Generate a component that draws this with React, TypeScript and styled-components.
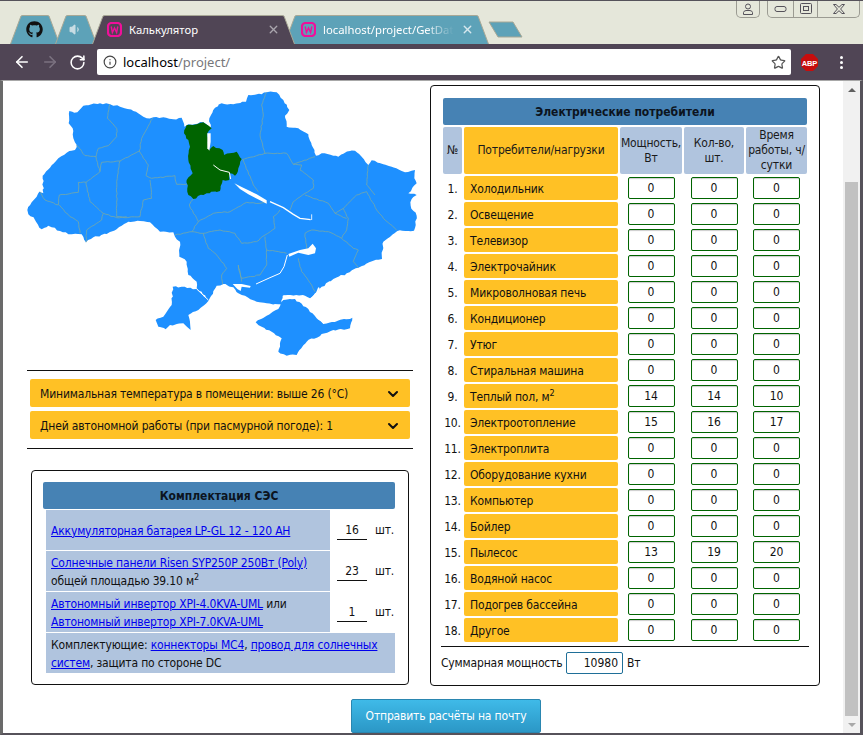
import React from "react";
import styled, { createGlobalStyle } from "styled-components";
import { ArrowLeft, ArrowRight, RotateCw, Info, Star, X, ChevronDown, Volume1 } from "lucide-react";
import { FaGithub } from "react-icons/fa";

const Global = createGlobalStyle`
  html, body { margin: 0; padding: 0; background: #fff; }
  * { box-sizing: border-box; }
  body { font-family: "DejaVu Sans Condensed", "Noto Sans", sans-serif; font-size: 12px; letter-spacing: -0.17px; color: #111; }
`;

const Page = styled.div`
  width: 863px; height: 735px; display: flex; flex-direction: column; overflow: hidden;
  background: #e5e7da; border-top: 1px solid #55525a;
`;
const TabStrip = styled.div`
  height: 43px; display: flex; align-items: flex-end; padding-left: 10px; position: relative;
`;
const TabBody = styled.div<{ $w: number; $active?: boolean; $overlap: number }>`
  position: relative; width: ${p => p.$w}px; height: 29px; flex: none; margin-right: -${p => p.$overlap}px;
  z-index: ${p => p.$active ? 1 : 0};
  display: flex; align-items: center; color: #fff; font: 11.3px "Noto Sans", sans-serif; letter-spacing: 0;
`;
const TabShape = styled.svg`
  position: absolute; left: 0; top: 0; width: 100%; height: 100%;
`;
const TabContent = styled.div<{ $pl: number }>`
  position: relative; display: flex; align-items: center; gap: 7px; width: 100%; padding: 0 15px 0 ${p => p.$pl}px;
`;
const TabTitle = styled.span<{ $fade?: boolean }>`
  flex: 1; white-space: nowrap; overflow: hidden;
  ${p => p.$fade ? "-webkit-mask-image: linear-gradient(90deg,#000 78%,transparent);" : ""}
`;
const NewTab = styled.svg`
  width: 36px; height: 18px; flex: none; margin: 0 0 5px 4px;
`;
const WindowButtons = styled.div`
  position: absolute; right: 3px; top: -1px; display: flex; gap: 7px;
`;
const WinGroup = styled.div`
  display: flex; height: 18px; border: 1px solid #9b9b92; border-top: 0; border-radius: 0 0 5px 5px;
`;
const WinBtn = styled.div<{ $w: number; $sep?: boolean }>`
  width: ${p => p.$w}px; display: flex; align-items: center; justify-content: center;
  ${p => p.$sep ? "border-right: 1px solid #9b9b92;" : ""}
`;
const Toolbar = styled.div`
  height: 36px; background: #504555; display: flex; align-items: center; padding: 0 0 0 13px; color: #fff;
`;
const NavIcon = styled.div<{ $dim?: boolean }>`
  width: 28px; display: flex; justify-content: flex-start; color: ${p => p.$dim ? "#7b7280" : "#fff"};
`;
const Omnibox = styled.div`
  width: 694px; height: 26px; background: #fff; border-radius: 2px;
  display: flex; align-items: center; padding: 0 5px 0 6px; gap: 6px; font: 13px "Noto Sans", sans-serif; letter-spacing: 0; color: #000;
`;
const UrlPath = styled.span`
  color: #77777a;
`;
const Url = styled.span`
  flex: 1;
`;
const Abp = styled.svg`
  margin-left: 10px; flex: none;
`;
const Dots = styled.div`
  display: flex; flex-direction: column; gap: 2px; margin-left: 22px;
  span { width: 3px; height: 3px; background: #fff; border-radius: 50%; }
`;
const Viewport = styled.div`
  flex: 1; min-height: 0; display: flex; background: #fff;
  border-left: 3px solid #6a6a6a; border-right: 3px solid #56525a; border-bottom: 2px solid #56525a; border-top: 1px solid #a8a8a8;
`;
const Content = styled.div`
  flex: 1; min-width: 0; display: flex; flex-direction: column; padding-top: 4px;
`;
const Columns = styled.div`
  display: flex; align-items: flex-start; padding-left: 24px; gap: 17px;
`;
const LeftCol = styled.div`
  width: 386px; flex: none; display: flex; flex-direction: column;
`;
const MapSvg = styled.svg`
  width: 390px; height: 280px; display: block;
`;
const Rule = styled.div<{ $mt: number; $mb: number }>`
  height: 1px; background: #111; margin: ${p => p.$mt}px 0 ${p => p.$mb}px;
`;
const Accordion = styled.div`
  margin: 0 3px 4px; height: 28px; background: #ffc125; border-radius: 2px; display: flex; align-items: center;
  justify-content: space-between; padding: 1px 9px 0 10px;
`;
const Panel = styled.div`
  border: 1px solid #111; border-radius: 4px; background: #fff;
`;
const KitPanel = styled(Panel)`
  margin: 21px 4px 0; height: 215px; padding: 11px 13px 0 11px;
`;
const Title = styled.div<{ $h: number }>`
  height: ${p => p.$h}px; background: #4682b4; border-radius: 2px; display: flex; align-items: center; justify-content: center;
  font-weight: 700; color: #0c1420; letter-spacing: 0;
`;
const KitRows = styled.div`
  display: flex; flex-direction: column; gap: 1px; padding-left: 3px; margin-top: 1px;
`;
const KitRow = styled.div`
  display: flex; align-items: center; height: 40px;
`;
const KitCell = styled.div<{ $full?: boolean }>`
  width: ${p => p.$full ? "349px" : "284px"}; height: 40px; background: #b0c4de; padding: 1px 5px 0;
  display: flex; flex-direction: column; justify-content: center; line-height: 18px;
  ${p => p.$full ? "display: block; padding-top: 3px;" : ""}
  sup { font-size: 9px; line-height: 1; }
`;
const A = styled.a`
  color: #0000ee; text-decoration: underline; cursor: pointer;
`;
const Line = styled.div``;
const QtyInput = styled.input`
  width: 30px; margin-left: 7px; border: 0; border-bottom: 1px solid #111; height: 19px; text-align: center; padding: 0;
  font: inherit; color: #111; outline: 0; background: transparent;
`;
const Unit = styled.span`
  margin-left: 8px;
`;
const TablePanel = styled(Panel)`
  width: 390px; height: 601px; flex: none; padding: 12px 12px 0 12px;
`;
const Grid = styled.div`
  display: grid; grid-template-columns: 19px 154px 62px 60px 61px; column-gap: 2px; row-gap: 2px; margin-top: 2px;
  grid-template-rows: 47px; grid-auto-rows: 24px;
`;
const HeadCell = styled.div<{ $orange?: boolean }>`
  background: ${p => p.$orange ? "#ffc125" : "#b0c4de"}; border-radius: 2px; display: flex; align-items: center; justify-content: center;
  text-align: center; line-height: 15px; color: #1a1a1a;
`;
const Num = styled.div`
  display: flex; align-items: center; justify-content: center; white-space: nowrap; padding-top: 1px;
`;
const Name = styled.div`
  background: #ffc125; border-radius: 2px; padding-left: 6px; line-height: 26px;
  sup { font-size: 9px; line-height: 0; }
`;
const ValueCell = styled.div`
  display: flex; align-items: center; justify-content: center;
`;
const ValueInput = styled.input`
  width: 47px; height: 22px; border: 1px solid #006400; border-radius: 2px; text-align: center; font: inherit; color: #111;
  padding: 0; outline: 0; box-shadow: inset 0 1px 1px rgba(0,0,0,.2); background: #fff;
`;
const Divider = styled.div`
  height: 1px; background: #111; margin: 4px -2px 5px;
`;
const Summary = styled.div`
  display: flex; align-items: center; margin-left: -2px;
`;
const SumLabel = styled.span`
  width: 125px; flex: none; white-space: nowrap;
`;
const SumUnit = styled.span`
  margin-left: 4px;
`;
const SumInput = styled.input`
  width: 57px; height: 22px; border: 1px solid #1f6f98; border-radius: 2px; text-align: right; font: inherit; color: #111;
  padding: 0 4px; outline: 0; background: #fff;
`;
const SendButton = styled.button`
  margin: 13px 0 0 348px; width: 190px; height: 34px; flex: none; border: 1px solid #2a86b0; border-radius: 2px;
  background: linear-gradient(#3fbae8, #2b97c6); color: #fff; font: inherit; letter-spacing: inherit;
`;
const Scrollbar = styled.div`
  width: 17px; flex: none; background: #f1f1f1; display: flex; flex-direction: column; padding: 0 2px;
`;
const Arrow = styled.div<{ $up?: boolean }>`
  height: 17px; flex: none; display: flex; align-items: center; justify-content: center;
  &::before {
    content: ""; border-left: 4px solid transparent; border-right: 4px solid transparent;
    ${p => p.$up ? "border-bottom: 4px solid #606060;" : "border-top: 4px solid #a8a8a8;"}
  }
`;
const Track = styled.div`
  flex: 1; padding-top: 84px;
`;
const Thumb = styled.div`
  height: 100%; background: #c1c1c1;
`;

const items: [string, number?, number?, number?][] = [
  ["Холодильник"], ["Освещение"], ["Телевизор"], ["Электрочайник"], ["Микроволновая печь"], ["Кондиционер"], ["Утюг"],
  ["Стиральная машина"], ["Теплый пол, м²", 14, 14, 10], ["Электроотопление", 15, 16, 17], ["Электроплита"], ["Оборудование кухни"],
  ["Компьютер"], ["Бойлер"], ["Пылесос", 13, 19, 20], ["Водяной насос"], ["Подогрев бассейна"], ["Другое"],
];

// Subdivide a hand-traced outline and nudge the new points, so that the borders look as jagged as a real map's.
const rough = (src: string, amp: number, closed = false): string => {
  const pts = src.split(" ").map(p => p.split(",").map(Number));
  if (closed) pts.push(pts[0]);
  const out: string[] = [];
  let seed = 7;
  const rnd = () => { seed = (seed * 9301 + 49297) % 233280; return seed / 233280 - 0.5; };
  for (let i = 0; i < pts.length - 1; i++) {
    const [x0, y0] = pts[i]; const [x1, y1] = pts[i + 1];
    const n = Math.max(1, Math.round(Math.hypot(x1 - x0, y1 - y0) / 9));
    for (let k = 0; k < n; k++) {
      const t = k / n; const j = k === 0 ? 0 : amp;
      out.push(`${(x0 + (x1 - x0) * t + rnd() * j).toFixed(1)},${(y0 + (y1 - y0) * t + rnd() * j).toFixed(1)}`);
    }
  }
  if (!closed) out.push(`${pts[pts.length - 1][0]},${pts[pts.length - 1][1]}`);
  return out.join(" ");
};

const borders = [
  "330,57 322,100 350,130 350,155 325,182 295,190 288,215 255,212 230,180",
  "458,100 425,160 418,198 360,228 305,232 300,260 258,292 235,292 235,322 178,330 175,360 135,345 120,320",
  "288,215 300,260",
  "418,198 445,240 438,272 455,280 525,272 530,298 560,298",
  "360,228 350,290 350,395 380,395",
  "258,292 270,350 310,385 350,398 420,395 430,345 455,340 450,285",
  "178,360 210,395 235,410 240,445",
  "310,385 305,405 260,435 258,472",
  "580,342 568,360 595,410 575,440 525,450",
  "595,410 640,385 690,380 740,352 780,355 800,352",
  "575,440 610,445 660,435 705,445 725,475 770,470 795,450 825,430 820,395 840,375",
  "610,445 625,490 650,510 680,550 665,570 668,598",
  "795,455 800,495 860,505",
  "800,495 800,540 780,570 725,580 715,540 725,590",
  "800,22 785,60 790,90 780,150 795,205 725,225",
  "795,205 860,205 880,238 945,215",
  "880,238 905,240 900,255 940,285 940,310 915,325 880,350 870,375",
  "915,330 985,355 1005,385 1030,370 1070,330 1100,320 1130,375 1150,400 1190,435",
  "1105,240 1100,300 1125,330",
  "1030,370 1045,400 1040,435 1025,460 1060,490 1075,495 1060,530 1075,548",
  "935,435 985,440 1025,460",
  "935,435 915,445 920,490",
  "895,520 905,560 935,600 945,620",
  "1005,385 1040,400",
  "730,225 760,300 775,320",
];

const mainland = "82,375 95,352 110,335 118,320 130,325 128,272 150,248 175,220 200,203 225,195 230,180 220,160 218,130 206,115 208,78 232,82 250,62 300,55 330,58 360,65 400,78 430,95 440,100 460,97 490,97 520,103 545,98 553,125 565,118 610,112 632,128 628,100 645,68 665,55 700,58 738,50 745,30 785,28 800,22 830,22 850,45 868,75 855,92 860,125 895,130 925,148 935,180 948,212 965,205 1000,212 1015,215 1050,198 1065,197 1085,215 1105,240 1115,226 1150,238 1175,245 1215,262 1245,255 1243,280 1250,295 1225,325 1250,330 1235,342 1232,362 1250,392 1242,437 1192,438 1150,470 1146,522 1118,528 1075,548 1040,565 1000,582 965,605 945,625 930,640 915,632 880,632 848,632 845,658 800,655 770,650 735,632 715,625 700,607 670,597 650,602 625,648 605,620 590,610 590,590 565,570 560,530 538,515 540,470 525,455 520,442 480,440 450,412 420,408 385,410 365,422 320,447 280,457 258,472 245,448 215,448 180,438 145,422 125,433 105,405 85,388";
const bessarabia = "467,705 490,695 515,660 518,605 545,605 590,612 625,648 595,675 565,690 572,735 550,715 510,720 497,733 475,725";
const crimea = "767,712 800,692 835,672 850,645 885,642 925,672 950,700 970,717 1057,698 1050,730 1000,735 975,745 920,770 890,810 860,812 835,800 845,760 815,740 785,725";
const kyiv = "552,145 560,120 590,118 610,112 635,130 622,145 628,195 640,183 668,195 672,210 710,200 725,222 715,250 705,272 690,265 688,285 668,285 660,318 620,325 580,342 565,330 560,285 578,265 565,225 570,185 565,165";

const waterLines: [string, number][] = [
  ["640,240 660,255 688,262 692,282", 3],
  ["810,350 850,368 880,388 900,400 932,404", 4],
  ["935,388 935,405", 2.5],
  ["862,510 852,545 840,565 810,578 768,597", 3],
  ["850,632 885,634 905,645 925,668", 3],
  ["925,650 945,690 972,717", 2],
  ["935,640 950,625 957,608", 5],
  ["590,612 625,645", 3],
];
const waterShapes = [
  "622,145 632,145 632,170 628,197 622,190",
  "703,295 725,306 750,318 770,328 800,346 800,356 780,346 745,328 720,312",
  "865,507 900,495 925,490 938,476 948,490 945,505 925,510 895,503 868,515",
  "698,597 725,597 752,603 750,608 725,605 722,618 712,612",
];

const UkraineMap = () => (
  <MapSvg viewBox="81 0 1170 840">
    <polygon points={rough(mainland, 5, true)} fill="#1e90ff" />
    <polygon points={rough(bessarabia, 5, true)} fill="#1e90ff" />
    <polygon points={rough(crimea, 5, true)} fill="#1e90ff" />
    {borders.map((b, i) => <polyline key={i} points={rough(b, 3)} fill="none" stroke="#76a8a6" strokeWidth={2.4} />)}
    <polygon points={rough(kyiv, 5, true)} fill="#006400" />
    {waterShapes.map((w, i) => <polygon key={i} points={w} fill="#fff" />)}
    {waterLines.map(([w, s], i) => <polyline key={i} points={w} fill="none" stroke="#fff" strokeWidth={s} />)}
  </MapSvg>
);

const Wamp = () => (
  <svg width="15" height="15" viewBox="0 0 15 15">
    <rect x="1" y="1" width="13" height="13" rx="3.5" fill="none" stroke="#f0109a" strokeWidth="2.2" />
    <polyline points="4.2,4.5 5.4,10.5 7.5,6 9.6,10.5 10.8,4.5" fill="none" stroke="#f0109a" strokeWidth="1.4" />
  </svg>
);

const Tab = ({ w, active, children, pl, overlap = 5 }: { w: number; active?: boolean; children: React.ReactNode; pl: number; overlap?: number }) => (
  <TabBody $w={w} $active={active} $overlap={overlap}>
    <TabShape viewBox={`0 0 ${w} 29`} preserveAspectRatio="none">
      <path d={`M0.5 29 L11 1 Q12 0.5 13 0.5 L${w - 13} 0.5 Q${w - 12} 0.5 ${w - 11} 1 L${w - 0.5} 29`} fill={active ? "#504555" : "#5da2b8"} stroke="#a8a896" />
    </TabShape>
    <TabContent $pl={pl}>{children}</TabContent>
  </TabBody>
);

const App = () => (
  <Page>
    <Global />
    <TabStrip>
      <Tab w={50} pl={16}><FaGithub size={17} color="#111" /></Tab>
      <Tab w={42} pl={14}><Volume1 size={13} color="#c9dde4" fill="#c9dde4" /></Tab>
      <Tab w={203} active pl={15} overlap={11}>
        <Wamp /><TabTitle>Калькулятор</TabTitle><X size={13} color="#aaa6ad" strokeWidth={2.5} />
      </Tab>
      <Tab w={205} pl={17}>
        <Wamp /><TabTitle $fade>localhost/project/GetData</TabTitle><X size={13} color="#d7e8ee" strokeWidth={2.5} />
      </Tab>
      <NewTab viewBox="0 0 36 18">
        <polygon points="1,1 25,1 34,16 10,16" fill="#5da2b8" stroke="#a8a896" />
      </NewTab>
      <WindowButtons>
        <WinGroup>
          <WinBtn $w={22}>
            <svg width="12" height="12" viewBox="0 0 12 12" fill="none" stroke="#55525a"><circle cx="6" cy="3.5" r="2.5" /><path d="M1.5 11.5 V9.5 Q1.5 8 4 7.5 H8 Q10.5 8 10.5 9.5 V11.5 Z" /></svg>
          </WinBtn>
        </WinGroup>
        <WinGroup>
          <WinBtn $w={26} $sep>
            <svg width="13" height="6" viewBox="0 0 13 6" fill="none" stroke="#55525a"><rect x="1" y="0.5" width="11" height="5" rx="2" /></svg>
          </WinBtn>
          <WinBtn $w={24} $sep>
            <svg width="12" height="11" viewBox="0 0 12 11" fill="none" stroke="#55525a"><rect x="0.5" y="0.5" width="11" height="10" rx="1" /><rect x="3.5" y="3.5" width="5" height="4" /></svg>
          </WinBtn>
          <WinBtn $w={41}>
            <svg width="12" height="10" viewBox="0 0 12 10" fill="#e5e7da" stroke="#55525a"><path d="M0.5 0.5 H3 L6 3.3 L9 0.5 H11.5 L7.6 5 L11.5 9.5 H9 L6 6.7 L3 9.5 H0.5 L4.4 5 Z" /></svg>
          </WinBtn>
        </WinGroup>
      </WindowButtons>
    </TabStrip>
    <Toolbar>
      <NavIcon><ArrowLeft size={18} strokeWidth={2.2} /></NavIcon>
      <NavIcon $dim><ArrowRight size={18} strokeWidth={2.2} /></NavIcon>
      <NavIcon><RotateCw size={17} strokeWidth={2.2} /></NavIcon>
      <Omnibox>
        <Info size={14} color="#444" />
        <Url>localhost<UrlPath>/project/</UrlPath></Url>
        <Star size={15} color="#555" />
      </Omnibox>
      <Abp width="17" height="17" viewBox="0 0 17 17">
        <polygon points="5,0 12,0 17,5 17,12 12,17 5,17 0,12 0,5" fill="#c70d0d" />
        <text x="8.5" y="11.5" textAnchor="middle" fontSize="7.5" fontWeight="700" fill="#fff" fontFamily="Liberation Sans">ABP</text>
      </Abp>
      <Dots><span /><span /><span /></Dots>
    </Toolbar>
    <Viewport>
      <Content>
        <Columns>
          <LeftCol>
            <UkraineMap />
            <Rule $mt={5} $mb={8} />
            <Accordion>Минимальная температура в помещении: выше 26 (°C)<ChevronDown size={16} strokeWidth={3} /></Accordion>
            <Accordion>Дней автономной работы (при пасмурной погоде): 1<ChevronDown size={16} strokeWidth={3} /></Accordion>
            <Rule $mt={5} $mb={0} />
            <KitPanel>
              <Title $h={27}>Комплектация СЭС</Title>
              <KitRows>
                <KitRow>
                  <KitCell><Line><A>Аккумуляторная батарея LP-GL 12 - 120 AH</A></Line></KitCell>
                  <QtyInput readOnly value="16" /><Unit>шт.</Unit>
                </KitRow>
                <KitRow>
                  <KitCell><Line><A>Солнечные панели Risen SYP250P 250Вт (Poly)</A></Line><Line>общей площадью 39.10 м<sup>2</sup></Line></KitCell>
                  <QtyInput readOnly value="23" /><Unit>шт.</Unit>
                </KitRow>
                <KitRow>
                  <KitCell><Line><A>Автономный инвертор XPI-4.0KVA-UML</A> или</Line><Line><A>Автономный инвертор XPI-7.0KVA-UML</A></Line></KitCell>
                  <QtyInput readOnly value="1" /><Unit>шт.</Unit>
                </KitRow>
                <KitRow>
                  <KitCell $full>Комплектующие: <A>коннекторы MC4</A>, <A>провод для солнечных систем</A>, защита по стороне DC</KitCell>
                </KitRow>
              </KitRows>
            </KitPanel>
          </LeftCol>
          <TablePanel>
            <Title $h={27}>Электрические потребители</Title>
            <Grid>
              <HeadCell>№</HeadCell>
              <HeadCell $orange>Потребители/нагрузки</HeadCell>
              <HeadCell>Мощность, Вт</HeadCell>
              <HeadCell>Кол-во, шт.</HeadCell>
              <HeadCell>Время работы, ч/ сутки</HeadCell>
              {items.map(([name, a = 0, b = 0, c = 0], i) => (
                <React.Fragment key={name}>
                  <Num>{i + 1}.</Num>
                  <Name>{name.endsWith("²") ? <>{name.slice(0, -1)}<sup>2</sup></> : name}</Name>
                  <ValueCell><ValueInput readOnly value={a} /></ValueCell>
                  <ValueCell><ValueInput readOnly value={b} /></ValueCell>
                  <ValueCell><ValueInput readOnly value={c} /></ValueCell>
                </React.Fragment>
              ))}
            </Grid>
            <Divider />
            <Summary><SumLabel>Суммарная мощность</SumLabel><SumInput readOnly value="10980" /><SumUnit>Вт</SumUnit></Summary>
          </TablePanel>
        </Columns>
        <SendButton>Отправить расчёты на почту</SendButton>
      </Content>
      <Scrollbar>
        <Arrow $up />
        <Track><Thumb /></Track>
        <Arrow />
      </Scrollbar>
    </Viewport>
  </Page>
);

export default App;
